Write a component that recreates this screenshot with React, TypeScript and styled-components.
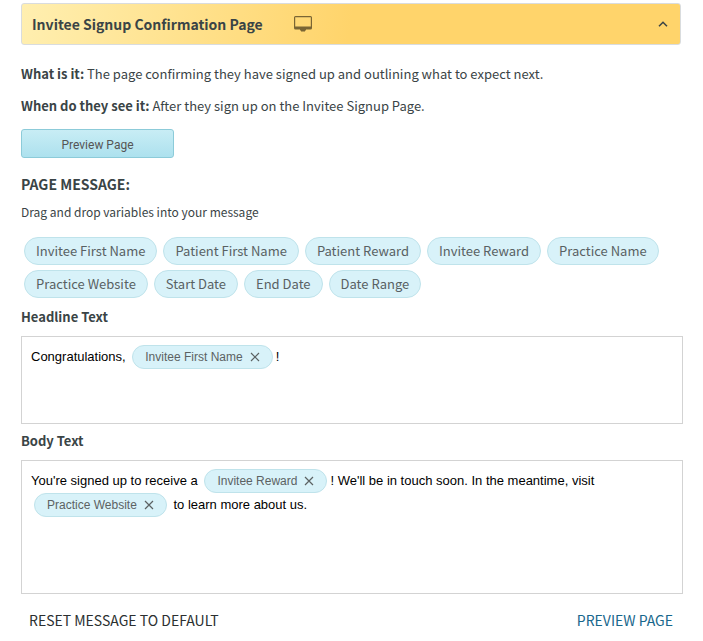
import React from "react";
import styled, { createGlobalStyle } from "styled-components";

const sans = `"Source Sans Pro", "Noto Sans CJK SC", sans-serif`;
const arial = `"Liberation Sans", Arial, sans-serif`;

const GlobalStyle = createGlobalStyle`
  *, *::before, *::after { box-sizing: border-box; }
  body {
    margin: 0;
    background: #fff;
    color: #3a4446;
    font-family: ${sans};
  }
  button { font: inherit; color: inherit; cursor: pointer; }
`;

const Page = styled.main`
  padding: 3px 20px 10px 21px;
`;

const AccordionHeader = styled.button`
  display: flex;
  align-items: center;
  width: calc(100% - 2px);
  height: 42px;
  padding: 0 12px 0 10px;
  border: 1px solid #d9dcde;
  border-radius: 3px;
  background: linear-gradient(100deg, #ffefb0 0%, #ffd46b 50%, #ffd46b 100%);
  text-align: left;
`;

const AccordionTitle = styled.span`
  font-size: 14px;
  font-weight: 700;
  line-height: 24px;
`;

const DeviceIcon = styled.svg`
  width: 18px;
  height: 16px;
  margin-left: 31px;
`;

const Chevron = styled.svg`
  width: 10px;
  height: 6px;
  margin-left: auto;
`;

const Details = styled.div`
  display: flex;
  flex-direction: column;
  align-items: flex-start;
  gap: 14px;
  margin-top: 20px;
`;

const Detail = styled.p`
  margin: 0;
  font-size: 13px;
  line-height: 18px;
`;

const PreviewButton = styled.button`
  width: 153px;
  height: 29px;
  padding: 2px 0 0;
  border: 1px solid #8ccbd9;
  border-radius: 3px;
  background: linear-gradient(#c8edf5, #ade1ee);
  color: #555;
  font-family: Roboto, sans-serif;
  font-size: 12px;
`;

const Heading = styled.h2`
  margin: 14px 0 6px;
  font-size: 14px;
  font-weight: 700;
  line-height: 24px;
`;

const Hint = styled.p`
  margin: 0;
  font-size: 12px;
  line-height: 20px;
`;

const Variables = styled.ul`
  display: flex;
  flex-wrap: wrap;
  gap: 5px 6px;
  margin: 15px 0 10px;
  padding: 0 3px;
  list-style: none;
`;

const Variable = styled.li`
  height: 28px;
  padding: 0 11px;
  border: 1px solid #bfe3eb;
  border-radius: 14px;
  background: #d8f2f9;
  color: #586163;
  font-size: 13px;
  line-height: 26px;
  cursor: grab;
`;

const FieldLabel = styled.div`
  margin-bottom: 10px;
  font-size: 13px;
  font-weight: 700;
  line-height: 18px;
`;

const Editor = styled.div<{ $rows: number }>`
  min-height: ${({ $rows }) => $rows * 23 + 19}px;
  margin-bottom: 8px;
  padding: 8px 9px;
  border: 1px solid #d3d3d3;
  color: #000;
  font-family: ${arial};
  font-size: 13px;
  line-height: 24px;
`;

const Token = styled.span`
  display: inline-flex;
  align-items: center;
  gap: 7px;
  height: 24px;
  margin: 0 3px;
  padding: 0 12px;
  border: 1px solid #bfe3eb;
  border-radius: 12px;
  background: #d8f2f9;
  color: #5c6263;
  font-size: 12px;
  line-height: 22px;
  vertical-align: top;
`;

const RemoveButton = styled.button`
  display: flex;
  padding: 0;
  border: 0;
  background: none;
`;

const Footer = styled.footer`
  display: flex;
  justify-content: space-between;
  margin-top: 16px;
  padding: 0 10px 0 8px;
`;

const TextButton = styled.button<{ $primary?: boolean }>`
  padding: 0;
  border: 0;
  background: none;
  color: ${({ $primary }) => ($primary ? "#17678c" : "#2b2f30")};
  font-size: 14px;
  line-height: 20px;
`;

const variables = [
  "Invitee First Name",
  "Patient First Name",
  "Patient Reward",
  "Invitee Reward",
  "Practice Name",
  "Practice Website",
  "Start Date",
  "End Date",
  "Date Range",
];

function VariableToken({ name }: { name: string }) {
  return (
    <Token contentEditable={false}>
      {name}
      <RemoveButton type="button" aria-label={`Remove ${name}`}>
        <svg width="10" height="10" viewBox="0 0 10 10" fill="none" stroke="currentColor" strokeWidth="1.2">
          <path d="M1 1l8 8M9 1l-8 8" />
        </svg>
      </RemoveButton>
    </Token>
  );
}

interface MessageFieldProps {
  id: string;
  label: string;
  rows: number;
  children: React.ReactNode;
}

function MessageField({ id, label, rows, children }: MessageFieldProps) {
  return (
    <>
      <FieldLabel id={id}>{label}</FieldLabel>
      <Editor
        $rows={rows}
        role="textbox"
        aria-multiline="true"
        aria-labelledby={id}
        contentEditable
        suppressContentEditableWarning
        spellCheck={false}
      >
        {children}
      </Editor>
    </>
  );
}

export default function App() {
  return (
    <>
      <GlobalStyle />
      <Page>
        <AccordionHeader type="button" aria-expanded="true">
          <AccordionTitle>Invitee Signup Confirmation Page</AccordionTitle>
          <DeviceIcon viewBox="0 0 18 16" aria-hidden="true">
            <path
              fill="#7a6534"
              fillRule="evenodd"
              d="M1.5 0h15A1.5 1.5 0 0 1 18 1.500v10.500a1.500 1.500 0 0 1-1.500 1.500H12v1H11v1H7v-1H6v-1H1.500A1.500 1.500 0 0 1 0 12v-10.500A1.500 1.500 0 0 1 1.500 0zM1.200 1.200v9.300h15.600V1.200z"
            />
          </DeviceIcon>
          <Chevron viewBox="0 0 10 6" fill="none" stroke="#3a4446" strokeWidth="1.5" aria-hidden="true">
            <path d="M1 5.300l4-4 4 4" />
          </Chevron>
        </AccordionHeader>

        <Details>
          <Detail>
            <strong>What is it:</strong> The page confirming they have signed up and outlining what to expect next.
          </Detail>
          <Detail>
            <strong>When do they see it:</strong> After they sign up on the Invitee Signup Page.
          </Detail>
          <PreviewButton type="button">Preview Page</PreviewButton>
        </Details>

        <Heading>PAGE MESSAGE:</Heading>
        <Hint>Drag and drop variables into your message</Hint>
        <Variables>
          {variables.map((name) => (
            <Variable key={name} draggable>
              {name}
            </Variable>
          ))}
        </Variables>

        <MessageField id="headline-label" label="Headline Text" rows={3}>
          Congratulations, <VariableToken name="Invitee First Name" />!
        </MessageField>
        <MessageField id="body-label" label="Body Text" rows={5}>
          You're signed up to receive a <VariableToken name="Invitee Reward" />! We'll be in touch soon. In the
          meantime, visit <VariableToken name="Practice Website" /> to learn more about us.
        </MessageField>

        <Footer>
          <TextButton type="button">RESET MESSAGE TO DEFAULT</TextButton>
          <TextButton type="button" $primary>
            PREVIEW PAGE
          </TextButton>
        </Footer>
      </Page>
    </>
  );
}
